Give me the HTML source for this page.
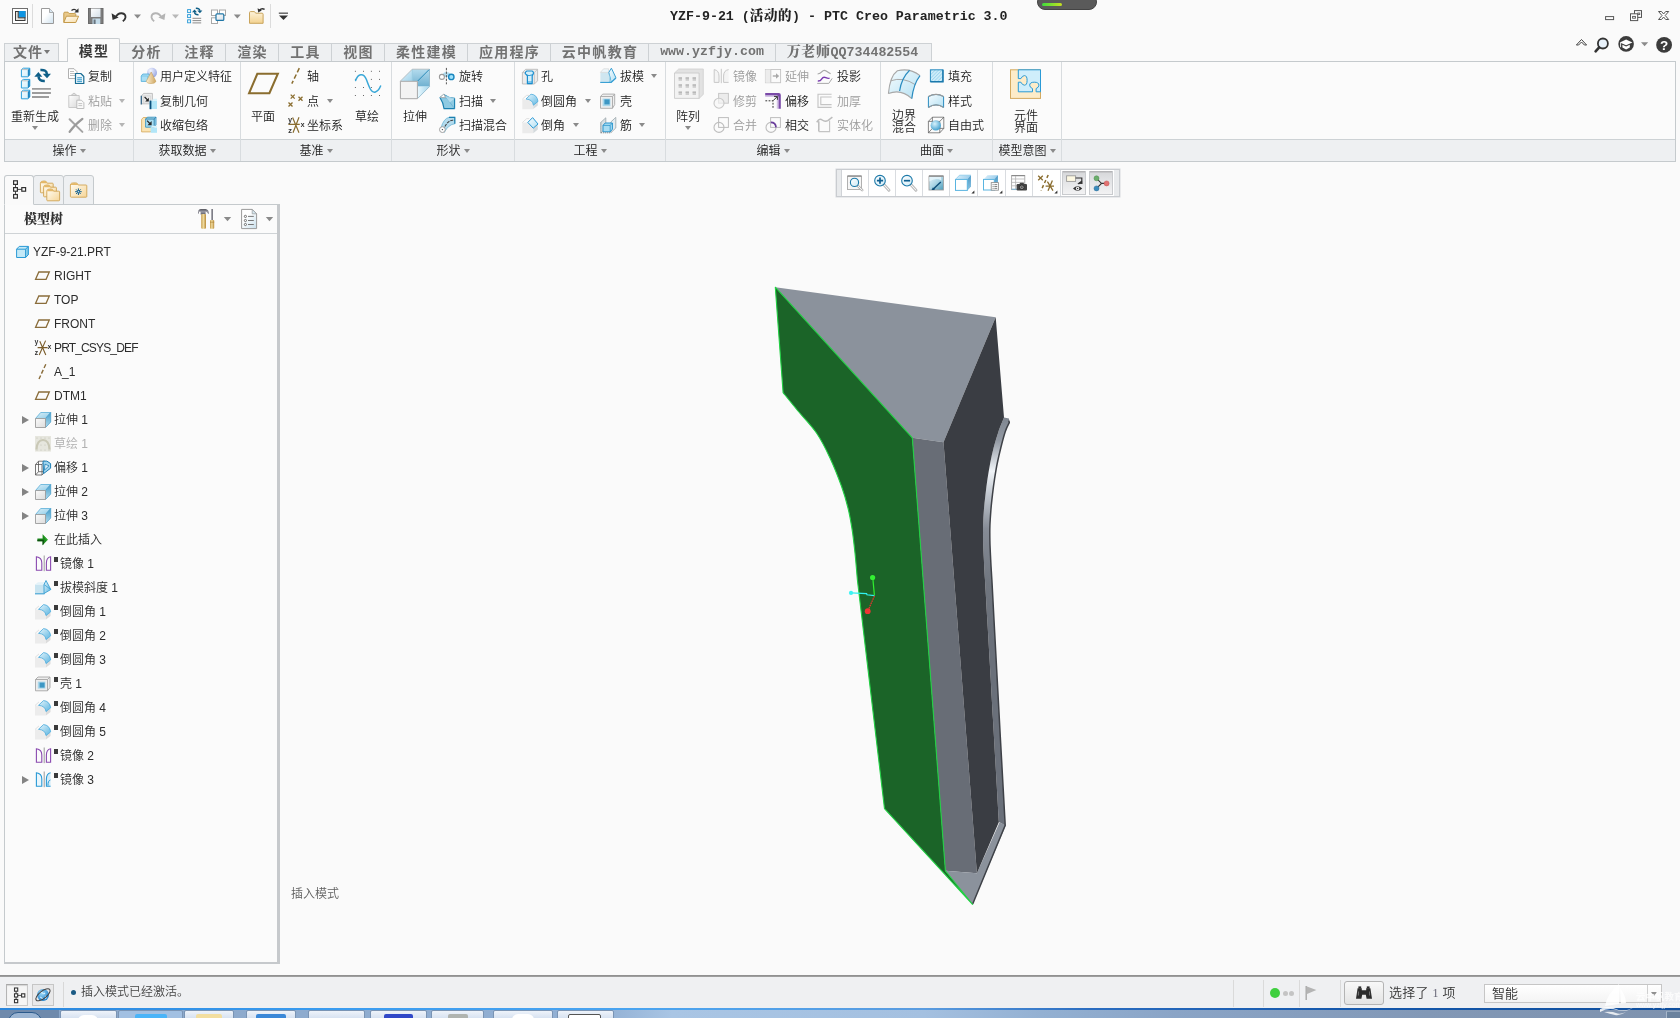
<!DOCTYPE html>
<html lang="zh-CN">
<head>
<meta charset="utf-8">
<title>YZF-9-21 - PTC Creo Parametric 3.0</title>
<style>
*{box-sizing:border-box;margin:0;padding:0}
html,body{width:1680px;height:1018px;overflow:hidden;background:#fafafa}
body{will-change:transform;position:relative;font-family:"Liberation Sans","Noto Sans CJK SC",sans-serif;font-size:12px;color:#3a3a3a}
.abs{position:absolute}
svg{position:absolute;overflow:visible}
/* title */
#title{position:absolute;left:670px;top:8px;width:340px;height:18px;line-height:18px;font-family:"Liberation Mono","Noto Serif CJK SC",monospace;font-weight:bold;font-size:13.3px;color:#222;white-space:nowrap;letter-spacing:0}
#title .cj{font-size:13.5px;letter-spacing:0.6px;font-weight:900}
/* tabs */
.tab{position:absolute;top:43px;height:19px;border:1px solid #cdd1d4;border-bottom:none;background:#eef0f2;font-family:"Liberation Sans","Noto Sans CJK SC",sans-serif;font-weight:bold;font-size:14px;letter-spacing:1.3px;color:#727272;text-align:center;line-height:16px;white-space:nowrap;padding-left:1px}
.tab.on{top:38px;height:24px;background:#fafafa;color:#3a3a3a;line-height:25px;border-color:#c9cdd0;z-index:3;border-radius:2px 2px 0 0}
.tab.lat{font-family:"Liberation Mono","Noto Sans CJK SC",monospace;font-size:13.3px;letter-spacing:0;font-weight:bold;padding-left:0}
/* ribbon */
#ribbon{position:absolute;left:4px;top:61px;width:1672px;height:101px;border:1px solid #c5cacd;background:#fbfbfb}
#riblab{position:absolute;left:5px;top:139px;width:1670px;height:22px;background:#eef0f2;border-top:1px solid #cdd2d5}
.gsep{position:absolute;top:62px;width:1px;height:99px;background:#d8dcdf}
.glab{position:absolute;top:142px;height:16px;line-height:16px;text-align:center;font-size:12px;color:#1c1c1c;white-space:nowrap;font-weight:350;margin-top:1px}
.dd{display:inline-block;width:0;height:0;border-left:3.5px solid transparent;border-right:3.5px solid transparent;border-top:4px solid #8a8a8a;vertical-align:middle;margin-left:3px;position:relative;top:-1px}
.t{position:absolute;height:16px;line-height:16px;font-size:12px;color:#1c1c1c;white-space:nowrap;font-weight:350;margin-top:1px}
.t.g{color:#9c9c9c}
.t.c{text-align:center}
.arr{position:absolute;width:0;height:0;border-left:3.5px solid transparent;border-right:3.5px solid transparent;border-top:4px solid #8a8a8a}
/* tree */
#treetabs div{position:absolute;top:175px;height:30px;width:31px;border:1px solid #c5cacd;background:#eef0f2;border-radius:3px 3px 0 0}
#tree{position:absolute;left:4px;top:204px;width:276px;height:760px;border:1px solid #c5cacd;border-right:3px solid #c6c9cc;border-bottom:2px solid #c6c9cc;background:#fbfbfb}
#treehdr{position:absolute;left:5px;top:205px;width:272px;height:29px;border-bottom:1.5px solid #cfd3d6}
.tr{position:absolute;left:54px;height:16px;line-height:16px;font-size:12px;color:#2c2c2c;white-space:nowrap;margin-top:1px;font-weight:350}
.tr.g{color:#b0b0b0}
.exp{position:absolute;left:21.5px;width:0;height:0;border-top:4px solid transparent;border-bottom:4px solid transparent;border-left:7px solid #848484;margin-top:1px}
/* graphics toolbar */
#gtb{position:absolute;left:836px;top:169px;width:284px;height:28px;border:1px solid #c9ccd0;background:#fff;box-shadow:0 0 0 0.5px #d8dadd}
/* status */
#stline{position:absolute;left:0;top:975px;width:1680px;height:2px;background:linear-gradient(#8a8a8a,#a4a4a4)}
#status{position:absolute;left:0;top:977px;width:1680px;height:32px;background:#eff0f2}
#taskbar{position:absolute;left:0;top:1009px;width:1680px;height:9px;background:linear-gradient(90deg,#8aa6c8 0,#92b0d4 36%,#a9c5e4 40%,#a4c0e0 55%,#93b0d2 62%,#8aa4c6 70%,#8298b6 85%,#7e92ae 100%)}
</style>
</head>
<body>
<!--DEFS-->
<svg width="0" height="0" style="left:0;top:0">
<defs>
<linearGradient id="gb1" x1="0" y1="0" x2="1" y2="1"><stop offset="0" stop-color="#d9eff9"/><stop offset="1" stop-color="#8fcbe6"/></linearGradient>
<linearGradient id="gb2" x1="0" y1="0" x2="0" y2="1"><stop offset="0" stop-color="#3f9bc9"/><stop offset="1" stop-color="#b7ddee"/></linearGradient>
<linearGradient id="gb3" x1="0" y1="0" x2="1" y2="1"><stop offset="0" stop-color="#e8f6fc"/><stop offset="1" stop-color="#58b4e0"/></linearGradient>
<linearGradient id="gg1" x1="0" y1="0" x2="1" y2="1"><stop offset="0" stop-color="#fafafa"/><stop offset="1" stop-color="#dcdcdc"/></linearGradient>
<g id="i-root"><path d="M0.600 6.200l2.600-2.800h9v8.400l-2.600 2.700h-9z" fill="#c4e9f7" stroke="#2a9ad6" stroke-width="1" stroke-linejoin="round"/><path d="M9.600 6.200l2.600-2.800v8.400l-2.600 2.700z" fill="#8fd0ec" stroke="#2a9ad6" stroke-width="1" stroke-linejoin="round"/><path d="M0.600 6.200h9" fill="none" stroke="#2a9ad6" stroke-width="1"/></g>
<g id="i-plane"><path d="M1.6 12.3L4.8 5h10.5l-3.2 7.3z" fill="none" stroke="#8a6d3b" stroke-width="1.3" stroke-linejoin="miter"/></g>
<g id="i-csys"><path d="M3.6 8.6h10M11.6 1.6L5.2 16M5.8 2.2l6 13.8" stroke="#7a5c2a" stroke-width="1.1" fill="none"/><text x="0.6" y="5.4" font-family="Liberation Mono,monospace" font-size="6.5" font-weight="bold" fill="#333">y</text><text x="0.6" y="15.6" font-family="Liberation Mono,monospace" font-size="6.5" font-weight="bold" fill="#333">z</text><text x="13.6" y="10.4" font-family="Liberation Mono,monospace" font-size="6.5" font-weight="bold" fill="#333">x</text></g>
<g id="i-axis"><path d="M11.8 1.2L5 16" stroke="#8a6d3b" stroke-width="1.4" stroke-dasharray="4.2 2" fill="none"/></g>
<g id="i-extrude"><path d="M1.5 7.5l5.2-6h10v9.5l-5.2 5.5h-10z" fill="#f2f2f2"/><path d="M1.5 7.5l5.2-6h10l-5.2 6z" fill="url(#gb1)" stroke="#5aaed8" stroke-width="0.8"/><path d="M11.5 7.5l5.2-6v9.5l-5.2 5.5z" fill="url(#gb2)" stroke="#4b9fcb" stroke-width="0.8"/><path d="M1.5 7.5h10v9h-10z" fill="url(#gg1)" stroke="#9c9c9c" stroke-width="0.9"/></g>
<g id="i-sketch"><rect x="1" y="1" width="16" height="15.6" fill="#e6e6de"/><path d="M2.5 14.5Q3 5 9 5t6.5 9.5" fill="none" stroke="#c9c8b6" stroke-width="2.2"/><g fill="#c4c4b4"><circle cx="3" cy="3" r=".6"/><circle cx="7" cy="3" r=".6"/><circle cx="11" cy="3" r=".6"/><circle cx="15" cy="3" r=".6"/><circle cx="3" cy="15" r=".6"/><circle cx="7" cy="15" r=".6"/><circle cx="11" cy="15" r=".6"/><circle cx="15" cy="15" r=".6"/><circle cx="7" cy="10" r=".6"/><circle cx="11" cy="10" r=".6"/></g></g>
<g id="i-offset"><path d="M1.5 5.5v10.5h6.5v-10.5zM1.5 5.5l3-3.3h6.5l-3 3.3M4.5 2.2v10.5l-3 3.3M8 16l3-3.3v-10.5M4.5 12.7h6.5" fill="none" stroke="#555" stroke-width="0.8"/><path d="M9 2.2q4-1.4 7.6 2.4v4.6L9.6 14.6z" fill="#9fd5ee" stroke="#1f7fb5" stroke-width="1" stroke-linejoin="round"/><path d="M11 5.2l4 1.6l-4.6 4.4z" fill="#e4f5fc" stroke="#1f7fb5" stroke-width="0.8" stroke-linejoin="round"/></g>
<g id="i-insert"><path d="M3.4 7.4h5.2V3.2l5.2 5.5l-5.2 5.6v-4.1H3.4z" fill="#1c8a1c"/><path d="M3.4 8.8h6.4v4.2l-1.2 1.3v-4.1H3.4z" fill="#0d4f10"/><path d="M8.6 3.2l5.2 5.5l-1.4 1.4z" fill="#35b535" opacity=".7"/></g>
<g id="i-mirror"><path d="M10.2 0.5V16.2" stroke="#9a9a9a" stroke-width="1"/><path d="M2.4 1.8Q7.8 2.6 7.8 8v7.2H2.4z" fill="none" stroke="#8a4ab0" stroke-width="1.1"/><path d="M16.600 1.800Q12.400 2.600 12.400 8v7.200h4.200z" fill="none" stroke="#8a4ab0" stroke-width="1.100"/></g>
<g id="i-mirror3"><path d="M10.2 0.5V16.2" stroke="#9a9a9a" stroke-width="1"/><path d="M2.4 1.8Q7.8 2.6 7.8 8v7.2H2.4z" fill="#eaf6fc" stroke="#2a9ad6" stroke-width="1.1"/><path d="M16.6 1.8Q12.4 2.6 12.4 8v7.2h4.2" fill="#d4ecf8" stroke="#2a9ad6" stroke-width="1.1"/><path d="M16.4 9q-2.6.6-2.4 5.6" fill="none" stroke="#2a9ad6" stroke-width="1"/></g>
<g id="i-draft"><path d="M1 5.5h9v9H1z" fill="#c9e4f0"/><path d="M1 5.5l3-2.2h7.5l-1.5 2.2z" fill="#e3f2f9"/><path d="M10 5.5l2-4l4.8 9l-6.8 4z" fill="url(#gb3)" stroke="#3a9fd2" stroke-width="0.9" stroke-linejoin="round"/><path d="M10 5.5l6.8 5" stroke="#3a9fd2" stroke-width="0.8"/><path d="M1 14.8h9.5" stroke="#3a9fd2" stroke-width="1.1"/></g>
<g id="i-round"><path d="M1 6.5h5.5q5 .5 5.5 6v4H1z" fill="#ececec"/><path d="M12 12.5l4.5-3.5v4l-4.5 3.5z" fill="#dcdcdc"/><path d="M4.5 6.3L9.5 1.6q6 .4 7.2 7.2L12 12.6q-.6-5.8-7.5-6.3z" fill="url(#gb3)" stroke="#49a9dc" stroke-width="0.8" stroke-linejoin="round"/><path d="M1 6.5l4-3.6" stroke="#e0e0e0" stroke-width="1"/></g>
<g id="i-shell"><path d="M1.5 4.5l2.5-2.5h12v10.5l-2.5 3.3h-12z" fill="#ededed" stroke="#a6a6a6" stroke-width="0.9" stroke-linejoin="round"/><path d="M1.5 4.5h12v11.3M13.5 4.5L16 2" fill="none" stroke="#a6a6a6" stroke-width="0.9"/><rect x="3.8" y="6.6" width="7.6" height="7" fill="#a9d6ea"/><rect x="5.6" y="7.6" width="5" height="5" fill="#3d97c4"/></g>
</defs>
</svg>
<!--/DEFS-->
<!-- TITLE BAR -->
<div id="title">YZF-9-21 (<span class="cj">活动的</span>) - PTC Creo Parametric 3.0</div>
<div class="abs" style="left:1037px;top:-6px;width:60px;height:16px;border-radius:8px;background:#5a5a5a;border:1px solid #444"></div>
<div class="abs" style="left:1042px;top:3px;width:20px;height:3px;border-radius:2px;background:linear-gradient(90deg,#3ddc3d,#c8e020)"></div>
<!--QAT-->
<svg id="qat" style="left:0;top:0" width="300" height="32" viewBox="0 0 300 32">
<defs>
<linearGradient id="gdoc" x1="0" y1="0" x2="1" y2="1"><stop offset="0.4" stop-color="#fff"/><stop offset="1" stop-color="#cfe2ef"/></linearGradient>
<linearGradient id="gfold" x1="0" y1="0" x2="0" y2="1"><stop offset="0" stop-color="#fdf3dc"/><stop offset="1" stop-color="#f3d28f"/></linearGradient>
<linearGradient id="gfold2" x1="0" y1="0" x2="1" y2="1"><stop offset="0" stop-color="#fffaf0"/><stop offset="1" stop-color="#f7dfae"/></linearGradient>
<linearGradient id="gwin" x1="0" y1="0" x2="1" y2="1"><stop offset="0" stop-color="#fff"/><stop offset="1" stop-color="#d4dfe8"/></linearGradient>
</defs>
<!-- window icon -->
<rect x="12.5" y="8.5" width="15" height="15" fill="#fff" stroke="#6e6e6e"/>
<rect x="15.5" y="11.5" width="9.5" height="9" fill="#e4e2dc" stroke="#3a3a3a"/>
<rect x="18.5" y="11" width="7" height="6.5" fill="#0d94e2"/>
<path d="M18.2 11v6.8H25.4" fill="none" stroke="#3a3a3a" stroke-width="1"/>
<rect x="32" y="4" width="1" height="24" fill="#dcdcdc"/>
<!-- new doc -->
<path d="M41.5 8.5h8l4 4v11h-12z" fill="url(#gdoc)" stroke="#9a9a9a"/>
<path d="M49.5 8.5v4h4" fill="#d8e6f0" stroke="#9a9a9a" stroke-width="0.8"/>
<!-- open folder -->
<path d="M63.8 22.3V13.2q0-1 1-1h3.2l1.2 1.4h5.6q1 0 1 1v1.4" fill="#e9c98a" stroke="#c49a4a" stroke-width="1"/>
<path d="M63.8 22.5l2.6-6.3h12.2l-2.8 6.3z" fill="url(#gfold2)" stroke="#c49a4a" stroke-width="1" stroke-linejoin="round"/>
<path d="M71.5 10.5q3-2.3 5.2.3" fill="none" stroke="#333" stroke-width="1.3"/><path d="M78.5 8.3v4.2h-4.2z" fill="#333"/>
<!-- save -->
<rect x="88.5" y="8.5" width="14.5" height="15" fill="#7c7c7c" stroke="#6a6a6a"/>
<rect x="91" y="8.5" width="9.5" height="8.5" fill="url(#gwin)"/>
<rect x="92.5" y="18.5" width="7.8" height="5.5" fill="#c4dbe9"/>
<rect x="93.6" y="19.5" width="2" height="4.5" fill="#6a7680"/>
<!-- undo -->
<path d="M115.5 17.5q2.2-4.6 6.3-4.2q4.2.6 3.6 4.4q-.4 2.2-2.6 3.6" fill="none" stroke="#333" stroke-width="1.9"/>
<path d="M111.6 13.3l1 6.6l6-2.3z" fill="#333"/>
<path d="M134 14.5h7l-3.5 4z" fill="#8a8a8a"/>
<!-- redo -->
<path d="M161.5 17.5q-2.2-4.6-6.3-4.2q-4.2.6-3.6 4.4q.4 2.2 2.6 3.6" fill="none" stroke="#b4b4b4" stroke-width="1.9"/>
<path d="M165.4 13.3l-1 6.6l-6-2.3z" fill="#b4b4b4"/>
<path d="M172 14.5h7l-3.5 4z" fill="#b8b8b8"/>
<!-- regenerate -->
<g fill="#eaf6fc" stroke="#2a9ad6" stroke-width="0.9"><rect x="187.6" y="9.6" width="3" height="3"/><rect x="187.6" y="14.6" width="3" height="3"/><rect x="187.6" y="19.8" width="3" height="3"/></g>
<g stroke="#8a8a8a" stroke-width="1"><path d="M192.5 18.3h8.7M192.5 20.6h8.7M192.5 22.9h8.7"/></g>
<path d="M192 12.300l2.500-2.900l2.500 2.900z" fill="#0f5e86"/><path d="M194.600 12.100Q194.700 15 198.500 14.800" fill="none" stroke="#0f5e86" stroke-width="1.500"/>
<path d="M197.300 10.600h5.100l-2.500 2.700z" fill="#0f5e86"/><path d="M199.800 10.800Q199.700 8.100 195.800 8.400" fill="none" stroke="#0f5e86" stroke-width="1.500"/>
<!-- windows -->
<g fill="#fff" stroke="#a8a8a8" stroke-width="1"><rect x="211.5" y="10" width="6" height="5.5"/><rect x="219.5" y="10" width="6" height="5.5"/><rect x="211.5" y="17.8" width="6" height="5.7"/></g>
<rect x="216" y="13.8" width="7.8" height="6.6" rx="1" fill="url(#gwin)" stroke="#1f76a6" stroke-width="1.2"/>
<path d="M233.8 14.5h7l-3.5 4z" fill="#8a8a8a"/>
<!-- close folder -->
<path d="M249.5 23.3V12.6q0-1 1-1h4l1.2 1.6h6.4q1 0 1 1v9.1z" fill="url(#gfold)" stroke="#c9a45c" stroke-width="1" stroke-linejoin="round"/>
<path d="M264.600 9.400q-3-1.800-5.200 1" fill="none" stroke="#333" stroke-width="1.400"/><path d="M257.600 8.200l.6 4.400l3.600-2z" fill="#333"/>
<rect x="270" y="4" width="1" height="24" fill="#dcdcdc"/>
<!-- customize -->
<rect x="278.8" y="12.6" width="9.2" height="1.1" fill="#333"/><path d="M279 15.4h9l-4.5 4.6z" fill="#333"/>
</svg>
<!--/QAT-->
<!--WINCTL-->
<svg id="winctl" style="left:1560px;top:0" width="120" height="62" viewBox="1560 0 120 62">
<rect x="1605.600" y="16.600" width="8" height="3" fill="#fff" stroke="#555" stroke-width="1"/>
<rect x="1634.500" y="10.600" width="7" height="6.800" fill="#fff" stroke="#555" stroke-width="1"/><rect x="1637.800" y="13" width="2" height="1.600" fill="none" stroke="#555" stroke-width="0.800"/>
<rect x="1630.500" y="13.800" width="7.200" height="6.800" fill="#fff" stroke="#555" stroke-width="1"/><rect x="1632.600" y="16.400" width="2.800" height="1.800" fill="none" stroke="#555" stroke-width="0.900"/>
<path d="M1658.500 11.500h3l2.100 2.500l2.100-2.500h3l-3.500 4l3.500 4h-3l-2.100-2.500l-2.100 2.500h-3l3.500-4z" fill="#fff" stroke="#555" stroke-width="1" stroke-linejoin="round"/>
<path d="M1576.400 45l5.100-5.500l5.100 5.500h-2.200l-2.900-3l-2.900 3z" fill="#fff" stroke="#444" stroke-width="1" stroke-linejoin="round"/>
<circle cx="1602.900" cy="43.500" r="5" fill="#e8f1fa" stroke="#333" stroke-width="1.800"/><path d="M1599.200 47.400l-3.600 4" stroke="#333" stroke-width="2.600" stroke-linecap="round"/>
<circle cx="1626.100" cy="43.900" r="7.800" fill="#3c3c3c"/><path d="M1619.800 42.400l6.300-2.800l6.300 2.800l-6.300 2.800z" fill="#fff"/><path d="M1622.400 44.800v2.800l3.700 1.800l3.700-1.800v-2.800l-3.700 1.700z" fill="#fff"/><path d="M1620.600 42.800v4.400" stroke="#fff" stroke-width="0.900"/>
<path d="M1641 42.200h7.200l-3.600 4z" fill="#8a8a8a"/>
<circle cx="1664.100" cy="44.900" r="7.900" fill="#3c3c3c"/>
<text x="1664.100" y="49.800" text-anchor="middle" font-family="Liberation Sans,sans-serif" font-weight="bold" font-size="13.500" fill="#fff">?</text>
</svg>
<!--/WINCTL-->
<!--TABS-->
<div class="tab" style="left:4px;width:55px;padding-left:0;letter-spacing:1px">文件<span class="dd" style="margin-left:1px;border-top-color:#777;border-left-width:3.5px;border-right-width:3.5px;border-top-width:4px"></span></div>
<div class="tab on" style="left:67px;width:53px">模型</div>
<div class="tab" style="left:119px;width:54px">分析</div>
<div class="tab" style="left:172px;width:54px">注释</div>
<div class="tab" style="left:225px;width:54px">渲染</div>
<div class="tab" style="left:278px;width:54px">工具</div>
<div class="tab" style="left:331px;width:54px">视图</div>
<div class="tab" style="left:384px;width:84px">柔性建模</div>
<div class="tab" style="left:467px;width:84px">应用程序</div>
<div class="tab" style="left:550px;width:99px">云中帆教育</div>
<div class="tab lat" style="left:648px;width:128px">www.yzfjy.com</div>
<div class="tab lat" style="left:775px;width:157px"><span style="position:relative;top:-2px;left:-1px"><span style="font-family:'Noto Serif CJK SC',serif;font-weight:900;font-size:14px;letter-spacing:0.6px">万老师</span>QQ734482554</span></div>
<!--RIBBON-->
<div id="ribbon"></div>
<div id="riblab"></div>
<!--RIBBONCONTENT-->
<div class="gsep" style="left:133px"></div><div class="gsep" style="left:240px"></div><div class="gsep" style="left:391px"></div><div class="gsep" style="left:514px"></div><div class="gsep" style="left:665px"></div><div class="gsep" style="left:880px"></div><div class="gsep" style="left:992px"></div><div class="gsep" style="left:1061px"></div>
<div class="glab" style="left:5px;width:128px">操作<span class="dd"></span></div>
<div class="glab" style="left:134px;width:106px">获取数据<span class="dd"></span></div>
<div class="glab" style="left:241px;width:150px">基准<span class="dd"></span></div>
<div class="glab" style="left:392px;width:122px">形状<span class="dd"></span></div>
<div class="glab" style="left:515px;width:150px">工程<span class="dd"></span></div>
<div class="glab" style="left:666px;width:214px">编辑<span class="dd"></span></div>
<div class="glab" style="left:881px;width:111px">曲面<span class="dd"></span></div>
<div class="glab" style="left:993px;width:68px">模型意图<span class="dd"></span></div>
<!-- group 1 -->
<div class="t c" style="left:4px;width:62px;top:108px">重新生成</div><div class="arr" style="left:32px;top:126px"></div>
<div class="t" style="left:88px;top:68px">复制</div>
<div class="t g" style="left:88px;top:93px">粘贴</div><div class="arr" style="left:119px;top:99px;border-top-color:#b5b5b5"></div>
<div class="t g" style="left:88px;top:117px">删除</div><div class="arr" style="left:119px;top:123px;border-top-color:#b5b5b5"></div>
<!-- group 2 -->
<div class="t" style="left:160px;top:68px">用户定义特征</div>
<div class="t" style="left:160px;top:93px">复制几何</div>
<div class="t" style="left:160px;top:117px">收缩包络</div>
<!-- group 3 -->
<div class="t c" style="left:243px;width:40px;top:108px">平面</div>
<div class="t" style="left:307px;top:68px">轴</div>
<div class="t" style="left:307px;top:93px">点</div><div class="arr" style="left:327px;top:99px"></div>
<div class="t" style="left:307px;top:117px">坐标系</div>
<div class="t c" style="left:347px;width:40px;top:108px">草绘</div>
<!-- group 4 -->
<div class="t c" style="left:395px;width:40px;top:108px">拉伸</div>
<div class="t" style="left:459px;top:68px">旋转</div>
<div class="t" style="left:459px;top:93px">扫描</div><div class="arr" style="left:490px;top:99px"></div>
<div class="t" style="left:459px;top:117px">扫描混合</div>
<!-- group 5 -->
<div class="t" style="left:541px;top:68px">孔</div>
<div class="t" style="left:541px;top:93px">倒圆角</div><div class="arr" style="left:585px;top:99px"></div>
<div class="t" style="left:541px;top:117px">倒角</div><div class="arr" style="left:573px;top:123px"></div>
<div class="t" style="left:620px;top:68px">拔模</div><div class="arr" style="left:651px;top:74px"></div>
<div class="t" style="left:620px;top:93px">壳</div>
<div class="t" style="left:620px;top:117px">筋</div><div class="arr" style="left:639px;top:123px"></div>
<!-- group 6 -->
<div class="t c" style="left:668px;width:40px;top:108px">阵列</div><div class="arr" style="left:685px;top:126px"></div>
<div class="t g" style="left:733px;top:68px">镜像</div>
<div class="t g" style="left:733px;top:93px">修剪</div>
<div class="t g" style="left:733px;top:117px">合并</div>
<div class="t g" style="left:785px;top:68px">延伸</div>
<div class="t" style="left:785px;top:93px">偏移</div>
<div class="t" style="left:785px;top:117px">相交</div>
<div class="t" style="left:837px;top:68px">投影</div>
<div class="t g" style="left:837px;top:93px">加厚</div>
<div class="t g" style="left:837px;top:117px">实体化</div>
<!-- group 7 -->
<div class="t c" style="left:884px;width:40px;top:110px;line-height:11.5px;height:26px">边界<br>混合</div>
<div class="t" style="left:948px;top:68px">填充</div>
<div class="t" style="left:948px;top:93px">样式</div>
<div class="t" style="left:948px;top:117px">自由式</div>
<!-- group 8 -->
<div class="t c" style="left:1006px;width:40px;top:110px;line-height:11.5px;height:26px">元件<br>界面</div>
<!--/RIBBONCONTENT-->
<!--RIB1-->
<svg id="ribico1" style="left:0;top:0" width="520" height="140" viewBox="0 0 520 140">
<defs>
<linearGradient id="r-cube" x1="0" y1="0" x2="1" y2="1"><stop offset="0" stop-color="#f4fcff"/><stop offset="1" stop-color="#d2effa"/></linearGradient>
<linearGradient id="r-lb" x1="0" y1="0" x2="1" y2="1"><stop offset="0" stop-color="#e6f6fd"/><stop offset="1" stop-color="#9fd2ea"/></linearGradient>
<linearGradient id="r-lb2" x1="0" y1="0" x2="0" y2="1"><stop offset="0" stop-color="#b4dcee"/><stop offset="1" stop-color="#6fb0d0"/></linearGradient>
<linearGradient id="r-lb3" x1="0" y1="0" x2="1" y2="0"><stop offset="0" stop-color="#eaf8fe"/><stop offset="1" stop-color="#a4d6ec"/></linearGradient>
<radialGradient id="r-sph" cx="0.35" cy="0.3" r="0.8"><stop offset="0" stop-color="#f4f6ff"/><stop offset="1" stop-color="#8f9fe0"/></radialGradient>
<linearGradient id="r-cone" x1="0" y1="0" x2="1" y2="0"><stop offset="0" stop-color="#fdf0d4"/><stop offset="1" stop-color="#cfa660"/></linearGradient>
<linearGradient id="r-gray" x1="0" y1="0" x2="1" y2="1"><stop offset="0" stop-color="#fff"/><stop offset="1" stop-color="#d8d8d8"/></linearGradient>
</defs>
<!-- regenerate big -->
<g id="rcube"><path d="M21.4 69.6l2-1.4h6.400v6.800l-2 1.800h-6.400z" fill="url(#r-cube)" stroke="#2aa0dc" stroke-width="1" stroke-linejoin="round"/><path d="M27.800 69.800l2-1.600v6.800l-2 1.800z" fill="#1f86c0"/><path d="M21.400 69.600h6.400" stroke="#b0b0b0" stroke-width="0.800"/></g>
<use href="#rcube" y="11.2"/><use href="#rcube" y="22"/>
<path d="M32 88.900h18.900M32 93h18.900M32 97h17" stroke="#9c9c9c" stroke-width="1.800"/>
<path d="M34.300 76.800l4.100-4.800l3.900 4.800z" fill="#0f5f88"/><path d="M38.500 76.400Q38.700 81.300 44.800 81" fill="none" stroke="#0f5f88" stroke-width="2.500"/>
<path d="M42.800 73.800h8.200l-4 4.500z" fill="#0f5f88"/><path d="M46.900 74.200Q46.700 69.500 40.400 70" fill="none" stroke="#0f5f88" stroke-width="2.500"/>
<!-- copy -->
<path d="M68.500 68.700h5.500l3 3v6.800h-8.500z" fill="#fff" stroke="#a8a8a8" stroke-width="0.900"/><path d="M70 71.500h4M70 73.500h5M70 75.500h5" stroke="#b8b8b8" stroke-width="0.900"/>
<path d="M75.500 73.500h5.300l3 3v7h-8.300z" fill="#eef8fd" stroke="#1a6d94" stroke-width="1.200" stroke-linejoin="round"/><path d="M77.200 77.800h4.800M77.200 79.800h4.800M77.200 81.700h4.800" stroke="#2a94c8" stroke-width="1"/>
<!-- paste disabled -->
<path d="M68.800 95.500h10.400v12h-10.400z" fill="url(#r-gray)" stroke="#c4c4c4" stroke-width="0.900"/><path d="M71.400 95.500l.8-1.400h1l.8-1.200l.8 1.200h1l.8 1.400z" fill="#e4e4e4" stroke="#bcbcbc" stroke-width="0.800"/>
<path d="M76.800 100.200h4.600l2.500 2.500v5.800h-7.100z" fill="#fafafa" stroke="#b8b8b8" stroke-width="0.900"/><path d="M78.400 103.600h3.800M78.400 105.600h3.800" stroke="#c0c0c0" stroke-width="0.900"/>
<!-- delete X -->
<path d="M69.600 119.300l12.800 12.600" stroke="#a4a4a4" stroke-width="2" stroke-linecap="round"/><path d="M82.400 118.800q-8 6-12.800 13" fill="none" stroke="#9a9a9a" stroke-width="2.200" stroke-linecap="round"/>
<!-- UDF -->
<circle cx="152" cy="72.800" r="5" fill="url(#r-sph)"/>
<path d="M141.200 76l1.600-2h6.400v6l-1.600 1.400h-6.400z" fill="#a9def4" stroke="#3aa0d4" stroke-width="0.700"/><path d="M141.200 76h6.400v5.400" fill="none" stroke="#6cc0e4" stroke-width="0.700"/>
<path d="M151.200 72l4.800 9.400q-1.200 2.200-5 2.200t-4.800-2.200z" fill="url(#r-cone)" stroke="#c49a50" stroke-width="0.500"/>
<!-- copy geom -->
<path d="M141.600 96l2-2.600h8.800v8l-2 2.400h-8.800z" fill="#ececec" stroke="#b4b4b4" stroke-width="0.800"/><path d="M141.300 95.800v8.600" stroke="#3c6a8a" stroke-width="1.300"/><path d="M143.600 95.800h7v7.400h-7z" fill="#e8e8e8" stroke="#cfcfcf" stroke-width="0.600"/>
<path d="M144.600 97l3.400 3.400" stroke="#222" stroke-width="1.200"/><path d="M148.800 97.800v3.600h-3.600z" fill="#222"/>
<path d="M149.600 100.800h7.400v8.200h-7.400z" fill="#b2e6f8"/><path d="M149.600 100.600v8.600h1.800v-8.600z" fill="#0c507c"/><path d="M151.400 100.800l2-2h3.600v2" fill="#d8f2fb"/>
<!-- shrinkwrap -->
<path d="M141.600 119.500l1.600-2h9v12.400l-1.600 2h-9z" fill="#fbe4b4" stroke="#d4a85c" stroke-width="0.800" stroke-linejoin="round"/>
<path d="M145.600 119l1.800-1.800h8.600v7.800l-1.800 2.200h-8.600z" fill="#a8def2" stroke="#2a8cc0" stroke-width="0.800" stroke-linejoin="round"/><path d="M154.200 119h-8.600M154.200 119v8.200M154.200 119l1.800-1.800" stroke="#1a6fa0" stroke-width="0.800" fill="none"/>
<path d="M147 120.600l3.600 3.600" stroke="#2a2a2a" stroke-width="1.300"/><path d="M151.600 121v4.200h-4.200z" fill="#2a2a2a"/>
<path d="M150.600 127.400h6.400v5.400h-6.400z" fill="#b2e6f8"/><path d="M150.600 127.400l1.600-1.600h4.800v1.600z" fill="#daf3fc"/>
<!-- plane big -->
<path d="M257.300 73.800h20.500l-8.400 19.400h-20.300z" fill="none" stroke="#8a6d2f" stroke-width="2.100" stroke-linejoin="miter"/>
<!-- axis -->
<path d="M299.300 68.200L291.800 83.700" stroke="#8a6d2f" stroke-width="1.500" stroke-dasharray="4.600 2.400"/>
<!-- points -->
<g stroke="#8a6d2f" stroke-width="1.300"><path d="M290.700 94.600l4 4m0-4l-4 4"/><path d="M298.500 96.700l4 4m0-4l-4 4"/><path d="M288.500 102.500l4 4m0-4l-4 4"/></g>
<!-- csys -->
<path d="M288.400 124.400h11.400M299 117.200l-6 15.600M292.600 117.600l6.400 15.200" stroke="#8a6d2f" stroke-width="1.200" fill="none"/>
<text x="288" y="122" font-family="Liberation Mono,monospace" font-size="7" font-weight="bold" fill="#333">y</text><text x="288" y="133" font-family="Liberation Mono,monospace" font-size="7" font-weight="bold" fill="#333">z</text><text x="300.400" y="127" font-family="Liberation Mono,monospace" font-size="7" font-weight="bold" fill="#333">x</text>
<!-- sketch big -->
<g fill="#666"><rect x="354.900" y="70.800" width="1" height="1"/><rect x="363" y="70.800" width="1" height="1"/><rect x="370.900" y="70.800" width="1" height="1"/><rect x="379" y="70.800" width="1" height="1"/><rect x="354.900" y="78.900" width="1" height="1"/><rect x="370.900" y="78.900" width="1" height="1"/><rect x="379" y="78.900" width="1" height="1"/><rect x="354.900" y="87" width="1" height="1"/><rect x="363" y="87" width="1" height="1"/><rect x="370.900" y="87" width="1" height="1"/><rect x="354.900" y="95" width="1" height="1"/><rect x="363" y="95" width="1" height="1"/><rect x="370.900" y="95" width="1" height="1"/><rect x="379" y="95" width="1" height="1"/></g>
<path d="M355.600 80.600C358 73.500 363.500 72.400 366.400 79.500C369 86 371 93.600 375.400 92C378.400 91 379.600 88.400 380.600 86" fill="none" stroke="#3aa8d8" stroke-width="1.500" stroke-linecap="round"/>
<!-- extrude big -->
<path d="M400.300 81.200l12-12h17.200v17.400l-12 12z" fill="#d9f0fa"/>
<path d="M400.300 81.200l12-12v12z" fill="url(#r-lb)"/>
<path d="M412.300 69.200h17.200v17.400h-12v-5.400h-5.200z" fill="url(#r-lb2)"/>
<path d="M417.500 86.600h12l-12 12z" fill="url(#r-lb3)"/>
<path d="M417.500 81.200l12-12" stroke="#2a8ab8" stroke-width="1"/><path d="M412.300 69.200v12" stroke="#8cc4dc" stroke-width="0.600"/>
<path d="M400.300 81.200l12-12h17.200" fill="none" stroke="#b4bcc0" stroke-width="0.900"/><path d="M429.500 69.200v17.400l-12 12" fill="none" stroke="#8ab4c8" stroke-width="0.800"/>
<path d="M400.400 81.300h17v17.400h-17z" fill="#f3f3f3" stroke="#a8a8a8" stroke-width="1"/>
<!-- revolve -->
<path d="M441.900 74.400q4.500-4.600 9.400 0v2.500h-9.400z" fill="#b2dcee"/>
<path d="M446.400 67.900v16.400" stroke="#555" stroke-width="1" stroke-dasharray="2.400 1.200"/>
<circle cx="441.900" cy="76.900" r="2.500" fill="#fff" stroke="#9a9a9a" stroke-width="1.100"/>
<circle cx="451.300" cy="76.900" r="2.700" fill="#9fe2fb" stroke="#1a86be" stroke-width="1.400"/>
<!-- sweep -->
<path d="M444 94.600q4 3 10.600 3.800v10.200h-10.600q-.4-5.400-4-11z" fill="#8ecae2" stroke="#1a80b0" stroke-width="1.100" stroke-linejoin="round"/>
<path d="M444 94.600l10.600 14M440 97.600l14.600 1" stroke="#5aa8cc" stroke-width="0.600"/><path d="M444.200 95l5.600 7.600l4.800-4.200" fill="#c4e6f4" opacity=".7"/>
<path d="M440 97.400l3.800-3.400l1.600 3.600z" fill="#fff" stroke="#a8a8a8" stroke-width="0.800"/>
<!-- swept blend -->
<path d="M441 128q2.600-9.600 8-10.600h5.800v6.400q-6 .4-10.600 8.600z" fill="#b4dcee" stroke="#6ab4d4" stroke-width="0.800" stroke-linejoin="round"/>
<path d="M443.200 130.200q3.600-9.400 9.400-10h2.200" fill="none" stroke="#444" stroke-width="1.100" stroke-dasharray="3 1"/>
<path d="M449 117.400h5.800v6.400" fill="none" stroke="#1a80b0" stroke-width="1.100"/>
<circle cx="442.400" cy="129.600" r="2.900" fill="#fff" stroke="#a0a0a0" stroke-width="1"/><circle cx="442.400" cy="129.600" r="0.700" fill="#444"/>
</svg>
<!--/RIB1-->
<!--RIB2-->
<svg id="ribico2" style="left:0;top:0" width="1070" height="140" viewBox="0 0 1070 140">
<defs>
<linearGradient id="q-lb" x1="0" y1="0" x2="1" y2="1"><stop offset="0" stop-color="#ecf9fe"/><stop offset="1" stop-color="#62b8e2"/></linearGradient>
<linearGradient id="q-lb2" x1="0" y1="0" x2="1" y2="1"><stop offset="0" stop-color="#f6fcff"/><stop offset="1" stop-color="#b4e0f2"/></linearGradient>
<linearGradient id="q-pur" x1="0" y1="0" x2="0" y2="1"><stop offset="0" stop-color="#6a3c9c"/><stop offset="1" stop-color="#d8c8ec" stop-opacity="0.3"/></linearGradient>
<linearGradient id="q-pur2" x1="1" y1="0" x2="0" y2="0"><stop offset="0" stop-color="#6a3c9c"/><stop offset="1" stop-color="#d8c8ec" stop-opacity="0.2"/></linearGradient>
<radialGradient id="q-sph" cx="0.4" cy="0.35" r="0.7"><stop offset="0" stop-color="#d8f2fc"/><stop offset="1" stop-color="#3a9ccc"/></radialGradient>
<pattern id="q-hatch" width="2.400" height="2.400" patternUnits="userSpaceOnUse" patternTransform="rotate(-45)"><rect width="2.400" height="2.400" fill="#d4effa"/><rect width="2.400" height="1" fill="#9fd6ee"/></pattern>
</defs>
<!-- hole -->
<path d="M522.400 72.500l3.200-3.200h12v11.500l-3.200 3.200h-12z" fill="#ececec" stroke="#b4b4b4" stroke-width="0.800" stroke-linejoin="round"/><path d="M522.400 72.500h12v11.500M534.400 72.500l3.200-3.200" fill="none" stroke="#c0c0c0" stroke-width="0.800"/>
<path d="M525.200 73.600q0-2 1.600-2.600h5.400q1.600.6 1.200 2.600l-1.200 2v8h-4.800v-8z" fill="#d4effa" stroke="#1a8fd0" stroke-width="1.200" stroke-linejoin="round"/><path d="M526 74.800q3 1.600 6.400 0" fill="none" stroke="#1a8fd0" stroke-width="0.900"/><path d="M527 82h5" stroke="#1a8fd0" stroke-width="0.900"/>
<!-- round -->
<g id="q-round"><path d="M522.300 99.200h5.500q5 .5 5.500 6v4h-11z" fill="#ebebeb"/><path d="M533.300 105l4.500-3.500v4l-4.500 3.500z" fill="#d8dde0"/><path d="M526 99L531 94.200q6 .4 7 7.200l-4.600 3.800q-.6-5.700-7.400-6.200z" fill="url(#q-lb)" stroke="#49a9dc" stroke-width="0.800" stroke-linejoin="round"/><path d="M522.300 99.200l4.200-3.800h3" stroke="#dcdcdc" stroke-width="0.900" fill="none"/></g>
<!-- chamfer -->
<path d="M522.300 122.600h6l5 5.600v5h-11z" fill="#ebebeb"/><path d="M533.300 128l4.500-3.600v5l-4.500 3.800z" fill="#d4dadd"/><path d="M522.300 122.600l4.400-4h2.600" stroke="#dcdcdc" stroke-width="0.900" fill="none"/>
<path d="M527.800 122.400l4.800-4.800l5.400 6.400l-4.800 4.200z" fill="url(#q-lb2)" stroke="#2a9ad6" stroke-width="1" stroke-linejoin="round"/>
<!-- draft -->
<path d="M600.400 72.400h8.400v9h-8.400z" fill="#cfe6f0"/><path d="M600.400 72.400l3.200-3.600h5l.4 3.600z" fill="#eef6fa" stroke="#c8c8c8" stroke-width="0.500"/>
<path d="M608.800 72.400l2.600-4.200l4.600 9.600l-4.800 4.400z" fill="url(#q-lb2)" stroke="#3aa0d4" stroke-width="1" stroke-linejoin="round"/><path d="M608.800 72.400l2.400 9.800h-2.400z" fill="#a4d4e8"/>
<path d="M600.200 82.400h11l4.800-4.400" fill="none" stroke="#3aa0d4" stroke-width="1.200"/>
<!-- shell -->
<path d="M600.500 96.500l2.200-2.400h12v10.500l-2.200 3.700h-12z" fill="#efefef" stroke="#a8a8a8" stroke-width="0.900" stroke-linejoin="round"/><path d="M600.500 96.500h12v11.800M612.500 96.500l2.200-2.400" fill="none" stroke="#a8a8a8" stroke-width="0.900"/>
<rect x="602.600" y="98.600" width="7.800" height="7.600" fill="#a9d8ec"/><rect x="604.400" y="99.400" width="5.200" height="5" fill="#3d97c4"/>
<!-- rib -->
<path d="M600.800 122.400l5-4.600v10.600l-5 4.400z" fill="#d8e0e4" stroke="#9aa4aa" stroke-width="0.800"/><path d="M610.800 122l5-4.600v10.600l-5 4.800z" fill="#e4ecf0" stroke="#9aa4aa" stroke-width="0.800"/>
<path d="M603 125.400l2.200-2.400h7.200v6.200l-2.200 2.600h-7.200z" fill="#a8dcf2" stroke="#2a94cc" stroke-width="1" stroke-linejoin="round"/><path d="M603 125.400h7.200v6.400M610.200 125.400l2.200-2.400" fill="none" stroke="#2a94cc" stroke-width="0.800"/>
<path d="M600.800 132.800h10" stroke="#666" stroke-width="0.900" stroke-dasharray="1 1"/><path d="M600.800 122.400v10.400" stroke="#9aa4aa" stroke-width="0.800" stroke-dasharray="1 1"/>
<!-- pattern big -->
<path d="M674.500 73l4.200-4h24.600v25.400l-4.200 4z" fill="#e2e2e2" stroke="#cfcfcf" stroke-width="0.800" stroke-linejoin="round"/>
<path d="M674.500 73h24.600v25.400h-24.600z" fill="#f2f2f2" stroke="#cbcbcb" stroke-width="0.900"/>
<g fill="#cdcdcd"><rect x="678.600" y="77.400" width="3.400" height="3.400"/><rect x="685.600" y="77.400" width="3.400" height="3.400"/><rect x="692.600" y="77.400" width="3.400" height="3.400"/><rect x="678.600" y="84.400" width="3.400" height="3.400"/><rect x="685.600" y="84.400" width="3.400" height="3.400"/><rect x="692.600" y="84.400" width="3.400" height="3.400"/><rect x="678.600" y="91.600" width="3.400" height="3.400"/><rect x="685.600" y="91.600" width="3.400" height="3.400"/><rect x="692.600" y="91.600" width="3.400" height="3.400"/></g>
<g fill="#b4b4b4"><rect x="678.600" y="77.400" width="3.400" height="1.200"/><rect x="685.600" y="77.400" width="3.400" height="1.200"/><rect x="692.600" y="77.400" width="3.400" height="1.200"/><rect x="678.600" y="84.400" width="3.400" height="1.200"/><rect x="685.600" y="84.400" width="3.400" height="1.200"/><rect x="692.600" y="84.400" width="3.400" height="1.200"/><rect x="678.600" y="91.600" width="3.400" height="1.200"/><rect x="685.600" y="91.600" width="3.400" height="1.200"/><rect x="692.600" y="91.600" width="3.400" height="1.200"/></g>
<!-- mirror disabled -->
<path d="M721.300 68.800v14.400" stroke="#c8c8c8" stroke-width="1"/><path d="M714.200 69.600Q719 70.400 719 76v6.400h-4.800z" fill="#f4f4f4" stroke="#c8c8c8" stroke-width="1"/><path d="M728.600 69.600Q723.600 70.400 723.600 76v6.400h5" fill="#f4f4f4" stroke="#c8c8c8" stroke-width="1"/>
<!-- trim disabled -->
<rect x="718.600" y="93.400" width="9.800" height="9.800" fill="#ececec" stroke="#c8c8c8" stroke-width="1"/><circle cx="719" cy="103.200" r="5" fill="#f6f6f6" fill-opacity=".6" stroke="#c8c8c8" stroke-width="1.100"/>
<!-- merge disabled -->
<rect x="718.600" y="117.600" width="9.800" height="9.800" fill="none" stroke="#bdbdbd" stroke-width="1"/><circle cx="719" cy="127.400" r="5" fill="none" stroke="#bdbdbd" stroke-width="1.100"/>
<!-- extend disabled -->
<rect x="765.400" y="69.500" width="15.200" height="13.200" fill="#fafafa" stroke="#c4c4c4" stroke-width="0.900"/><rect x="765.400" y="69.500" width="5.400" height="13.200" fill="#ececec"/><path d="M770.800 69.500v13.200" stroke="#c4c4c4" stroke-width="0.900"/>
<path d="M772.800 76h4" stroke="#a8a8a8" stroke-width="1.400"/><path d="M776 73.200l3.200 2.800l-3.200 2.800z" fill="#a8a8a8"/>
<!-- offset -->
<path d="M765.200 93h13.600q2 0 2 2v13.800h-2.400V97q0-1.600-1.600-1.600h-11.600z" fill="#7a4aa8"/><path d="M765.200 95.400h11.600q1.600 0 1.600 1.600v11.800h-1.600V98.200q0-1.200-1.200-1.200h-10.400z" fill="#c9b4e0" opacity=".8"/>
<path d="M765.400 100.800h7.600v8" fill="none" stroke="#333" stroke-width="1" stroke-dasharray="1.800 1.400"/><path d="M773 100.800l4-4" stroke="#333" stroke-width="1"/><path d="M774 96.400h3.400v3.400" fill="none" stroke="#333" stroke-width="1"/>
<!-- intersect -->
<rect x="770.600" y="117.600" width="9.800" height="9.800" fill="none" stroke="#bdbdbd" stroke-width="1"/><circle cx="771" cy="127.400" r="5" fill="none" stroke="#bdbdbd" stroke-width="1.100"/><path d="M770.800 122.400q5 0 5.200 5" fill="none" stroke="#6a3c9c" stroke-width="1.600"/>
<!-- project -->
<path d="M817.600 74q2.600-.2 4.400-2.400t4.200-.6t4.400 2.800" fill="none" stroke="#a8a8a8" stroke-width="1.200"/>
<path d="M817.200 83.400h11.600l3.400-5" fill="none" stroke="#a8a8a8" stroke-width="1"/>
<path d="M817.800 81q2.600.2 4-2.200t4-1.200t3.800.4" fill="none" stroke="#7a3cb0" stroke-width="1.400"/>
<!-- thicken disabled -->
<path d="M831.600 94.200h-13.600v13.200h13.600M831.600 97h-10.800v7.600h10.800" fill="none" stroke="#c4c4c4" stroke-width="1.100"/>
<!-- solidify disabled -->
<path d="M818.800 131.600v-9.600l-1.600-.4q2.400-3.600 5-1.600t5.600.6l4.600-3.400" fill="none" stroke="#bcbcbc" stroke-width="1.500"/><path d="M818.800 131.600h10.800v-11" fill="none" stroke="#c4c4c4" stroke-width="1.100"/>
<!-- boundary blend big -->
<path d="M888.400 93.600Q890 76 897.400 70.800Q910 67.600 920 75.600Q913.500 84 911.800 98.600Q901 88.500 888.400 93.600z" fill="url(#q-lb2)"/>
<path d="M888.400 93.600Q890 76 897.400 70.800Q910 67.600 920 75.600" fill="none" stroke="#a8a8a8" stroke-width="1.100"/><path d="M888.400 93.600Q901 88.500 911.800 98.600" fill="none" stroke="#a8a8a8" stroke-width="1.100"/>
<path d="M890.600 80.800Q903 76.500 915.200 84.600" fill="none" stroke="#a8a8a8" stroke-width="1"/>
<path d="M920 75.600Q913.500 84 911.800 98.600M909.600 70.200Q901.500 78 899.600 91" fill="none" stroke="#2a8cc0" stroke-width="1.200"/>
<!-- fill -->
<rect x="930.400" y="69.800" width="12.400" height="11.800" fill="url(#q-hatch)" stroke="#2a8cc0" stroke-width="1"/><path d="M930.400 81.800h12.600v-12" fill="none" stroke="#1a78ac" stroke-width="1.400"/>
<!-- style -->
<path d="M928.400 107.400V96.600q7.600-4.400 15.200 0v10.800q-7.600-5-15.200 0z" fill="url(#q-lb2)" stroke="#2a8cc0" stroke-width="1" stroke-linejoin="round"/><path d="M928.400 96.600q7.600-4.400 15.200 0M928.400 107.400q7.600-5 15.200 0" fill="none" stroke="#9a9a9a" stroke-width="1.200"/>
<!-- freestyle -->
<path d="M928.400 121.400l4-4.200h11.400v11.200l-4 4.400h-11.400zM928.400 121.400h11.400v11.400M939.800 121.400l4-4.200M932.400 117.200v11.200l-4 4.400M932.400 128.400h11.400" fill="none" stroke="#555" stroke-width="0.700"/>
<circle cx="935.800" cy="125.400" r="5.200" fill="url(#q-sph)"/>
<!-- component interface big -->
<rect x="1010.500" y="69.800" width="30" height="28.600" fill="#fdecc9" stroke="#d4aa60" stroke-width="1"/>
<path d="M1018.300 69.800h22.200v22h-4.400v-3.200q2.800-1.200 2.800-3.400q0-3-4.600-3t-4.600 3q0 2.200 2.800 3.400v3.200h-14.200v-9.600h2.600q1.400 3 3.600 3q2.600 0 2.600-4.800t-2.600-4.800q-2.200 0-3.600 3h-2.600z" fill="#cfeefb" stroke="#2a9ad6" stroke-width="1" stroke-linejoin="round"/>
</svg>
<!--/RIB2-->
<!--TREE-->
<div id="treetabs"><div style="left:4px;width:30px;background:#fafafa;border-bottom-color:#fafafa;z-index:2"></div><div style="left:33px"></div><div style="left:63px"></div></div>
<div id="tree"></div><div id="treehdr"></div>
<div class="abs" style="left:24px;top:210px;height:18px;line-height:18px;font-family:'Liberation Serif','Noto Serif CJK SC',serif;font-weight:900;font-size:13px;color:#333;white-space:nowrap">模型树</div>
<svg style="left:16px;top:243px" width="18" height="16" viewBox="0 0 18 16"><use href="#i-root"/></svg>
<div class="tr" style="left:33px;top:243px">YZF-9-21.PRT</div>
<svg style="left:34px;top:267px" width="18" height="16" viewBox="0 0 18 16"><use href="#i-plane"/></svg>
<div class="tr" style="left:54px;top:267px">RIGHT</div>
<svg style="left:34px;top:291px" width="18" height="16" viewBox="0 0 18 16"><use href="#i-plane"/></svg>
<div class="tr" style="left:54px;top:291px">TOP</div>
<svg style="left:34px;top:315px" width="18" height="16" viewBox="0 0 18 16"><use href="#i-plane"/></svg>
<div class="tr" style="left:54px;top:315px">FRONT</div>
<svg style="left:34px;top:339px" width="18" height="16" viewBox="0 0 18 16"><use href="#i-csys"/></svg>
<div class="tr" style="left:54px;top:339px;letter-spacing:-0.85px">PRT_CSYS_DEF</div>
<svg style="left:34px;top:363px" width="18" height="16" viewBox="0 0 18 16"><use href="#i-axis"/></svg>
<div class="tr" style="left:54px;top:363px">A_1</div>
<svg style="left:34px;top:387px" width="18" height="16" viewBox="0 0 18 16"><use href="#i-plane"/></svg>
<div class="tr" style="left:54px;top:387px">DTM1</div>
<div class="exp" style="top:415px"></div>
<svg style="left:34px;top:411px" width="18" height="16" viewBox="0 0 18 16"><use href="#i-extrude"/></svg>
<div class="tr" style="left:54px;top:411px">拉伸 1</div>
<svg style="left:34px;top:435px" width="18" height="16" viewBox="0 0 18 16"><use href="#i-sketch"/></svg>
<div class="tr g" style="left:54px;top:435px">草绘 1</div>
<div class="exp" style="top:463px"></div>
<svg style="left:34px;top:459px" width="18" height="16" viewBox="0 0 18 16"><use href="#i-offset"/></svg>
<div class="tr" style="left:54px;top:459px">偏移 1</div>
<div class="exp" style="top:487px"></div>
<svg style="left:34px;top:483px" width="18" height="16" viewBox="0 0 18 16"><use href="#i-extrude"/></svg>
<div class="tr" style="left:54px;top:483px">拉伸 2</div>
<div class="exp" style="top:511px"></div>
<svg style="left:34px;top:507px" width="18" height="16" viewBox="0 0 18 16"><use href="#i-extrude"/></svg>
<div class="tr" style="left:54px;top:507px">拉伸 3</div>
<svg style="left:34px;top:531px" width="18" height="16" viewBox="0 0 18 16"><use href="#i-insert"/></svg>
<div class="tr" style="left:54px;top:531px">在此插入</div>
<div class="abs" style="left:54px;top:557px;width:4px;height:5px;background:#3a3a3a"></div>
<svg style="left:34px;top:555px" width="18" height="16" viewBox="0 0 18 16"><use href="#i-mirror"/></svg>
<div class="tr" style="left:60px;top:555px">镜像 1</div>
<div class="abs" style="left:54px;top:581px;width:4px;height:5px;background:#3a3a3a"></div>
<svg style="left:34px;top:579px" width="18" height="16" viewBox="0 0 18 16"><use href="#i-draft"/></svg>
<div class="tr" style="left:60px;top:579px">拔模斜度 1</div>
<div class="abs" style="left:54px;top:605px;width:4px;height:5px;background:#3a3a3a"></div>
<svg style="left:34px;top:603px" width="18" height="16" viewBox="0 0 18 16"><use href="#i-round"/></svg>
<div class="tr" style="left:60px;top:603px">倒圆角 1</div>
<div class="abs" style="left:54px;top:629px;width:4px;height:5px;background:#3a3a3a"></div>
<svg style="left:34px;top:627px" width="18" height="16" viewBox="0 0 18 16"><use href="#i-round"/></svg>
<div class="tr" style="left:60px;top:627px">倒圆角 2</div>
<div class="abs" style="left:54px;top:653px;width:4px;height:5px;background:#3a3a3a"></div>
<svg style="left:34px;top:651px" width="18" height="16" viewBox="0 0 18 16"><use href="#i-round"/></svg>
<div class="tr" style="left:60px;top:651px">倒圆角 3</div>
<div class="abs" style="left:54px;top:677px;width:4px;height:5px;background:#3a3a3a"></div>
<svg style="left:34px;top:675px" width="18" height="16" viewBox="0 0 18 16"><use href="#i-shell"/></svg>
<div class="tr" style="left:60px;top:675px">壳 1</div>
<div class="abs" style="left:54px;top:701px;width:4px;height:5px;background:#3a3a3a"></div>
<svg style="left:34px;top:699px" width="18" height="16" viewBox="0 0 18 16"><use href="#i-round"/></svg>
<div class="tr" style="left:60px;top:699px">倒圆角 4</div>
<div class="abs" style="left:54px;top:725px;width:4px;height:5px;background:#3a3a3a"></div>
<svg style="left:34px;top:723px" width="18" height="16" viewBox="0 0 18 16"><use href="#i-round"/></svg>
<div class="tr" style="left:60px;top:723px">倒圆角 5</div>
<div class="abs" style="left:54px;top:749px;width:4px;height:5px;background:#3a3a3a"></div>
<svg style="left:34px;top:747px" width="18" height="16" viewBox="0 0 18 16"><use href="#i-mirror"/></svg>
<div class="tr" style="left:60px;top:747px">镜像 2</div>
<div class="exp" style="top:775px"></div>
<div class="abs" style="left:54px;top:773px;width:4px;height:5px;background:#3a3a3a"></div>
<svg style="left:34px;top:771px" width="18" height="16" viewBox="0 0 18 16"><use href="#i-mirror3"/></svg>
<div class="tr" style="left:60px;top:771px">镜像 3</div>
<!--/TREE-->
<!--TREEICO-->
<svg id="treeico" style="left:0;top:170px;z-index:5" width="290" height="70" viewBox="0 170 290 70">
<defs>
<linearGradient id="t-fold" x1="0" y1="0" x2="1" y2="1"><stop offset="0" stop-color="#fffdf6"/><stop offset="1" stop-color="#f6d698"/></linearGradient>
<linearGradient id="t-wood" x1="0" y1="0" x2="1" y2="0"><stop offset="0" stop-color="#c49a48"/><stop offset="0.45" stop-color="#f0dca0"/><stop offset="1" stop-color="#b88a38"/></linearGradient>
<linearGradient id="t-steel" x1="0" y1="0" x2="0" y2="1"><stop offset="0" stop-color="#55555c"/><stop offset="0.5" stop-color="#9a9aa4"/><stop offset="1" stop-color="#5a5a62"/></linearGradient>
<linearGradient id="t-doc" x1="0" y1="0" x2="1" y2="1"><stop offset="0.35" stop-color="#fff"/><stop offset="1" stop-color="#c8dfec"/></linearGradient>
</defs>
<!-- tree tab icon -->
<g fill="#fff" stroke="#333" stroke-width="1.200"><rect x="13.600" y="180.800" width="3.800" height="3.600"/><rect x="13.600" y="187.600" width="3.800" height="3.600"/><rect x="13.600" y="194.500" width="3.800" height="3.600"/><rect x="21.800" y="187.600" width="3.800" height="3.600"/></g>
<path d="M15.500 184.400v3.200M15.500 191.200v3.300M17.400 189.400h4.400" stroke="#333" stroke-width="0.900"/>
<!-- folders -->
<g id="tf"><path d="M40.400 192V183.200q0-1.200 1.200-1.800q3-.8 4.400 0l1.200 1.800h5.200q.8 0 .8.800v8q0 .8-.8.800h-11.200q-.8 0-.8-.8z" fill="url(#t-fold)" stroke="#d0a454" stroke-width="0.900"/><path d="M41.200 181.600q3-1 5.200 0l.8 1.600h-6.400z" fill="#e4b868"/></g>
<use href="#tf" x="3.200" y="4"/><use href="#tf" x="6.400" y="8"/>
<!-- folder star -->
<path d="M70.400 196.400V185q0-1.200 1.200-1.800q3.400-.8 5.400 0l1.200 1.800h7.800q.8 0 .8.800v10.600q0 .8-.8.800h-14.800q-.8 0-.8-.8z" fill="url(#t-fold)" stroke="#d0a454" stroke-width="0.900"/><path d="M71.200 183.400q3.400-1 6.200 0l.8 1.600h-7.800z" fill="#e4b868"/>
<g stroke="#0f5f90" stroke-width="1"><path d="M78.400 188.400v6.600M75.100 191.700h6.600M76.100 189.400l4.600 4.600M80.700 189.400l-4.600 4.600"/></g><circle cx="78.400" cy="191.700" r="1" fill="#fff" stroke="#0f5f90" stroke-width="0.800"/>
<!-- hammer -->
<path d="M198 212.600q0-3.400 3-3.600h4.600q3 .4 3.400 4.400l-.8.400q-1-2-2.600-2.200v3h-5v-2.800h-1.600v1.600h-1z" fill="url(#t-steel)"/>
<rect x="201.200" y="214" width="4.800" height="14.800" rx="1" fill="url(#t-wood)"/>
<rect x="211.400" y="209" width="1.500" height="11.400" fill="#70707a"/><rect x="210" y="220" width="4.200" height="8.800" rx="0.800" fill="url(#t-wood)"/><path d="M210 222.200h4.200" stroke="#a87c30" stroke-width="0.600"/>
<path d="M223.800 217h7.400l-3.700 4.200z" fill="#8a8a8a"/>
<!-- doc -->
<path d="M241.600 209.400h10.600l4.400 4.400v14.800h-15z" fill="url(#t-doc)" stroke="#9a9a9a" stroke-width="1"/><path d="M252.200 209.400v4.400h4.400z" fill="#d4e8f2" stroke="#9a9a9a" stroke-width="0.700"/>
<g fill="#fff" stroke="#555" stroke-width="0.800"><circle cx="245.400" cy="216.400" r="1.100"/><circle cx="245.400" cy="220.500" r="1.100"/><circle cx="245.400" cy="224.500" r="1.100"/></g><path d="M248 216.400h5.800M248 220.500h5.800M248 224.500h5.800" stroke="#777" stroke-width="1"/>
<path d="M265.800 217h7.400l-3.700 4.200z" fill="#8a8a8a"/>
</svg>
<!--/TREEICO-->
<!--GTB-->
<div id="gtb"></div>
<div class="abs" style="left:837px;top:170px;width:5px;height:26px;background:#e8eaec;border-right:1px solid #d0d3d7"></div>
<div class="abs" style="left:1114px;top:170px;width:5px;height:26px;background:#e8eaec"></div>
<div class="abs" style="left:868px;top:170px;width:1px;height:26px;background:#d9dce0"></div>
<div class="abs" style="left:895px;top:170px;width:1px;height:26px;background:#d9dce0"></div>
<div class="abs" style="left:922px;top:170px;width:1px;height:26px;background:#d9dce0"></div>
<div class="abs" style="left:949px;top:170px;width:1px;height:26px;background:#d9dce0"></div>
<div class="abs" style="left:977px;top:170px;width:1px;height:26px;background:#d9dce0"></div>
<div class="abs" style="left:1005px;top:170px;width:1px;height:26px;background:#d9dce0"></div>
<div class="abs" style="left:1032px;top:170px;width:1px;height:26px;background:#d9dce0"></div>
<div class="abs" style="left:1060px;top:170px;width:1px;height:26px;background:#d9dce0"></div>
<div class="abs" style="left:1062px;top:171px;width:24px;height:24px;background:linear-gradient(#b4b4b6 0,#b4b4b6 1px,#d8d9db 2px,#e2e3e5 40%,#f2f2f3 100%);border:1px solid #c9cbce;border-top:none"></div>
<div class="abs" style="left:1089px;top:171px;width:24px;height:24px;background:linear-gradient(#b4b4b6 0,#b4b4b6 1px,#d8d9db 2px,#e2e3e5 40%,#f2f2f3 100%);border:1px solid #c9cbce;border-top:none"></div>
<svg id="gtbico" style="left:834px;top:166px" width="290" height="34" viewBox="834 166 290 34">
<defs>
<linearGradient id="g-lens" x1="0" y1="0" x2="1" y2="1"><stop offset="0" stop-color="#fff"/><stop offset="1" stop-color="#cfeaf6"/></linearGradient>
<linearGradient id="g-rep" x1="0" y1="0" x2="1" y2="1"><stop offset="0" stop-color="#e8f6fb"/><stop offset="0.5" stop-color="#a9d4e4"/><stop offset="1" stop-color="#4a9cba"/></linearGradient>
<linearGradient id="g-top" x1="0" y1="0" x2="1" y2="0"><stop offset="0" stop-color="#d8eefa"/><stop offset="1" stop-color="#9accea"/></linearGradient>
<linearGradient id="g-side" x1="0" y1="0" x2="0" y2="1"><stop offset="0" stop-color="#4a98c6"/><stop offset="1" stop-color="#8cc4e2"/></linearGradient>
</defs>
<!-- refit -->
<rect x="847.500" y="176.200" width="14" height="13.300" fill="#f6f6f6" stroke="#a8a8a8" stroke-width="0.900"/><path d="M847.500 176h14" stroke="#8a8a8a" stroke-width="1.300"/>
<path d="M857.600 185.600l4.600 4.600" stroke="#b8b8b8" stroke-width="2.600" stroke-linecap="round"/><path d="M857.600 185.600l4.600 4.600" stroke="#f4f4f4" stroke-width="1" stroke-linecap="round"/>
<circle cx="854.500" cy="182.400" r="4.100" fill="url(#g-lens)" stroke="#1a78a8" stroke-width="1.100"/>
<!-- zoom in -->
<path d="M884 184.800l5 5.400" stroke="#b0b0b0" stroke-width="2.800" stroke-linecap="round"/><path d="M884 184.800l5 5.400" stroke="#f6f6f6" stroke-width="1.100" stroke-linecap="round"/>
<circle cx="880" cy="180.700" r="5.300" fill="url(#g-lens)" stroke="#1a78a8" stroke-width="1.100"/><path d="M880 177.600v6.200M876.900 180.700h6.200" stroke="#0f5f90" stroke-width="1.700"/>
<!-- zoom out -->
<path d="M911 184.800l5 5.400" stroke="#b0b0b0" stroke-width="2.800" stroke-linecap="round"/><path d="M911 184.800l5 5.400" stroke="#f6f6f6" stroke-width="1.100" stroke-linecap="round"/>
<circle cx="907" cy="180.700" r="5.300" fill="url(#g-lens)" stroke="#1a78a8" stroke-width="1.100"/><path d="M903.900 180.700h6.200" stroke="#0f5f90" stroke-width="1.700"/>
<!-- repaint -->
<rect x="929" y="176.200" width="14.400" height="13.800" fill="url(#g-rep)" stroke="#a0a0a0" stroke-width="0.900"/><path d="M929 176h14.400" stroke="#8a8a8a" stroke-width="1.400"/>
<path d="M929.400 181.600q6-4.600 12-1.200l-.4-3.400h-11.600z" fill="#e4f4fb" opacity=".9"/>
<path d="M940.800 182l-7.200 6.800" stroke="#0f4f7a" stroke-width="1.400"/><path d="M931.600 190l1.200-2.400l2.600 1.200l-1.400 1.200z" fill="#0f4f7a"/>
<!-- display style cube -->
<path d="M955.500 179.400l4-4.200h11.400v11.400l-3.600 4z" fill="url(#g-top)"/><path d="M967.300 179.400l3.600-4.200v11.400l-3.600 4z" fill="url(#g-side)"/>
<rect x="955.500" y="179.400" width="11.800" height="11" fill="#fff" stroke="#5ab4e0" stroke-width="1"/><path d="M955.500 179.400l4-4.200h11.400" fill="none" stroke="#8ccaea" stroke-width="0.800"/>
<path d="M974.400 190.400v3h-3z" fill="#333"/>
<!-- saved orientations -->
<path d="M983.500 179.400l4-4.200h10.400v11.400l-3.600 4z" fill="url(#g-top)"/><path d="M994.300 179.400l3.600-4.200v11.400l-3.600 4z" fill="url(#g-side)"/>
<rect x="983.500" y="179.400" width="10.800" height="10.600" fill="#fff" stroke="#5ab4e0" stroke-width="1"/>
<rect x="991.200" y="182.600" width="7.200" height="7.600" fill="#fafafa" stroke="#8a8a8a" stroke-width="0.800"/><path d="M992.600 184.600h1M994.400 184.600h2.800M992.600 186.500h1M994.400 186.500h2.800M992.600 188.400h1M994.400 188.400h2.800" stroke="#666" stroke-width="0.800"/>
<path d="M1002.400 190.400v3h-3z" fill="#333"/>
<!-- view manager -->
<rect x="1011.600" y="175.600" width="13.200" height="14" fill="#fff" stroke="#a8a8a8" stroke-width="0.900"/><path d="M1011.600 175.600h13.200" stroke="#8a8a8a" stroke-width="1.200"/><path d="M1011.600 179h13.200M1011.600 182.400h13.200M1011.600 185.800h6M1015.600 176v13.600" stroke="#b4b4b4" stroke-width="0.800"/><path d="M1011.800 189.200h5" stroke="#7ab8dc" stroke-width="1"/>
<path d="M1016.600 185q0-1 1-1h1.800l.8-1.200h3.200l.8 1.200h1.800q1 0 1 1v4.600q0 1-1 1h-8.400q-1 0-1-1z" fill="#444"/><circle cx="1021.800" cy="187.300" r="2.300" fill="#9a9a9a" stroke="#222" stroke-width="0.800"/><circle cx="1021.800" cy="187.300" r="1" fill="#555"/>
<!-- datum display -->
<g stroke="#8a6d2f" stroke-width="1.300" fill="none"><path d="M1038.200 175.800l4.600 4.400M1042.800 175.800l-4.600 4.400"/><path d="M1048.200 175L1041 190.600" stroke-dasharray="3.200 2.400" stroke-width="1.500"/><path d="M1045.600 186.200h8.400M1052.400 180.600l-4.400 10.200M1047.400 181.600l5.600 9"/></g>
<path d="M1057.400 190.400v3h-3z" fill="#333"/>
<!-- annotation display -->
<rect x="1066.600" y="175.800" width="9" height="5.600" fill="#fdf8e2" stroke="#9a9a9a" stroke-width="0.900"/>
<path d="M1075.600 178h6.200v4.600" fill="none" stroke="#333" stroke-width="1.200"/><path d="M1077.200 183.800l4.800-3.400l.6 3.600z" fill="#333"/><path d="M1081.800 181.600l-3.400 2.400" stroke="#333" stroke-width="1.300"/>
<path d="M1073 188.500q4.600-4.400 9.200 0q-4.600 4.400-9.200 0z" fill="#333"/><circle cx="1077.600" cy="188.500" r="1.700" fill="#fff"/><circle cx="1077.600" cy="188.500" r="0.800" fill="#333"/>
<!-- spin center -->
<path d="M1096.500 178.300l5 5.100l-5 4.900M1101.500 183.400h5" fill="none" stroke="#333" stroke-width="1.100"/>
<circle cx="1096.500" cy="178.300" r="2.500" fill="#6cae6c" stroke="#4a8c4a" stroke-width="0.500"/><circle cx="1106.600" cy="183.400" r="2.500" fill="#e27272" stroke="#c05050" stroke-width="0.500"/><circle cx="1096.500" cy="188.400" r="2.500" fill="#3c8cbc" stroke="#2a6a98" stroke-width="0.500"/>
</svg>
<!--/GTB-->
<!--MODEL-->
<svg id="model" style="left:0;top:0" width="1680" height="1018" viewBox="0 0 1680 1018">
<defs>
<linearGradient id="gstrip" gradientUnits="userSpaceOnUse" x1="1000" y1="418" x2="1000" y2="640"><stop offset="0" stop-color="#7f8690"/><stop offset="0.1" stop-color="#9299a3"/><stop offset="0.24" stop-color="#f0f4f8"/><stop offset="0.34" stop-color="#c3c9d1"/><stop offset="0.5" stop-color="#868c96"/><stop offset="0.75" stop-color="#70767f"/><stop offset="1" stop-color="#6a707a"/></linearGradient>
</defs>
<path d="M775.3 287.2L995.7 317.3L943.5 442.2L912.3 437.8Z" fill="#8b929c"/>
<path d="M912.3 437.8L943.5 442.2L976.9 873.2L945.4 870.8Z" fill="#686d76"/>
<path d="M945.4 870.8L976.9 873.2L999.5 822.5L1006 825.2L972.5 904.3Z" fill="#8b929c"/>
<path d="M1004 417.5L1009 418.4L1009.3 422.6C1008.6 424.1 1006.7 427.4 1005.3 431.5C1003.9 435.6 1002.3 441.8 1001.0 447.0C999.7 452.2 998.4 457.7 997.3 463.0C996.2 468.3 995.4 473.5 994.6 478.7C993.8 483.9 993.1 489.2 992.5 494.4C991.9 499.6 991.3 504.8 990.9 510.0C990.5 515.2 990.1 520.5 989.9 525.8C989.7 531.1 989.8 535.9 989.9 541.6C990.0 547.3 990.4 553.5 990.7 560.0C991.0 566.5 991.3 570.3 991.9 580.3C992.5 590.3 993.2 605.0 994.0 620.0C994.8 635.0 995.8 653.3 996.7 670.0C997.6 686.7 998.6 705.0 999.4 720.0C1000.2 735.0 1000.6 742.5 1001.6 760.0C1002.6 777.5 1004.6 814.3 1005.2 825.2L998.9 822C998.3 811.7 996.3 777.0 995.3 760.0C994.3 743.0 993.9 735.0 993.0 720.0C992.1 705.0 991.2 686.7 990.2 670.0C989.2 653.3 988.2 635.0 987.3 620.0C986.4 605.0 985.6 590.0 985.0 580.0C984.4 570.0 984.2 566.4 983.9 560.0C983.6 553.6 983.2 547.3 983.1 541.6C983.0 535.9 983.0 531.1 983.1 525.8C983.2 520.5 983.5 515.2 983.9 510.0C984.3 504.8 984.9 499.6 985.5 494.4C986.1 489.2 986.7 483.9 987.5 478.7C988.3 473.5 989.2 468.3 990.2 463.0C991.2 457.7 992.4 452.2 993.8 447.0C995.2 441.8 996.8 436.4 998.5 431.5C1000.2 426.6 1003.1 419.8 1004.0 417.5Z" fill="url(#gstrip)"/>
<path d="M1008.8 420.6L1009.3 422.6C1008.6 424.1 1006.7 427.4 1005.3 431.5C1003.9 435.6 1002.3 441.8 1001.0 447.0C999.7 452.2 998.4 457.7 997.3 463.0C996.2 468.3 995.4 473.5 994.6 478.7C993.8 483.9 993.1 489.2 992.5 494.4C991.9 499.6 991.3 504.8 990.9 510.0C990.5 515.2 990.1 520.5 989.9 525.8C989.7 531.1 989.8 535.9 989.9 541.6C990.0 547.3 990.4 553.5 990.7 560.0C991.0 566.5 991.3 570.3 991.9 580.3C992.5 590.3 993.2 605.0 994.0 620.0C994.8 635.0 995.8 653.3 996.7 670.0C997.6 686.7 998.6 705.0 999.4 720.0C1000.2 735.0 1000.6 742.5 1001.6 760.0C1002.6 777.5 1004.6 814.3 1005.2 825.2L972.7 904" fill="none" stroke="#3e4147" stroke-width="1.5" stroke-linejoin="round"/>
<path d="M995.7 317.3L1004 417.5C1003.1 419.8 1000.2 426.6 998.5 431.5C996.8 436.4 995.2 441.8 993.8 447.0C992.4 452.2 991.2 457.7 990.2 463.0C989.2 468.3 988.3 473.5 987.5 478.7C986.7 483.9 986.1 489.2 985.5 494.4C984.9 499.6 984.3 504.8 983.9 510.0C983.5 515.2 983.2 520.5 983.1 525.8C983.0 531.1 983.0 535.9 983.1 541.6C983.2 547.3 983.6 553.6 983.9 560.0C984.2 566.4 984.4 570.0 985.0 580.0C985.6 590.0 986.4 605.0 987.3 620.0C988.2 635.0 989.2 653.3 990.2 670.0C991.2 686.7 992.1 705.0 993.0 720.0C993.9 735.0 994.3 743.0 995.3 760.0C996.3 777.0 998.3 811.7 998.9 822.0L976.9 873.2L943.5 442.2Z" fill="#3a3d43"/>
<path id="gface" d="M775.3 287.2L912.3 437.8L945.4 870.8L972.5 904.3L884.5 808.7L857.4 580C857.0 575.5 855.9 561.5 855.0 553.0C854.1 544.5 853.2 536.3 852.0 528.8C850.8 521.3 849.8 515.1 848.0 508.0C846.2 500.9 844.5 494.6 841.5 486.3C838.5 478.0 834.1 466.8 830.0 458.0C825.9 449.2 822.0 441.1 816.7 433.3C811.4 425.5 803.6 417.8 798.0 411.0C792.4 404.2 785.6 395.7 783.1 392.6Z" fill="#1b6428" stroke="#22d044" stroke-width="1.1" stroke-linejoin="round"/>
<path d="M874.4 595.4L872.8 578" stroke="#30ee30" stroke-width="1.2"/><circle cx="872.6" cy="577.5" r="2.6" fill="#33f033"/>
<path d="M874.4 595.6L867 594.8L866.6 593.6L851 592.9" stroke="#30f0f0" stroke-width="1.2" fill="none"/><circle cx="851" cy="592.9" r="2.1" fill="#3cf4f4"/>
<path d="M874.4 596L867.9 610.8" stroke="#f03030" stroke-width="1.2" stroke-dasharray="1.6 0.8"/><circle cx="867.7" cy="611.2" r="2.9" fill="#f23434"/>
<text x="291" y="898" font-family="Liberation Sans,Noto Sans CJK SC,sans-serif" font-size="12" font-weight="350" fill="#5e5e5e">插入模式</text>
</svg>
<!--/MODEL-->
<!--STATUS-->
<div id="stline"></div><div id="status"></div><div id="taskbar"></div>
<div class="abs" style="left:0;top:1008px;width:1680px;height:2px;background:linear-gradient(90deg,#2a86dc,#3a9cf0 20%,#4aa4f0 38%,#5a9ce0 55%,#2a6cc0 65%,#1558ac 80%,#0f4f9e)"></div>
<div class="abs" style="left:0;top:1010px;width:59px;height:8px;background:#6f8aac"></div>
<div class="abs" style="left:8px;top:1012px;width:34px;height:20px;border-radius:17px;border:1.5px solid #2a5a8c;background:#9ab4d2"></div>
<div class="abs" style="left:60px;top:1010px;width:57px;height:10px;background:linear-gradient(#eef3fa,#d4e0f0);border:1px solid #7a94b4;border-radius:2px 2px 0 0"></div>
<div class="abs" style="left:118px;top:1010px;width:65px;height:10px;background:#a2c0e2;border:1px solid #7a94b4;border-radius:2px 2px 0 0"></div>
<div class="abs" style="left:135px;top:1014px;width:32px;height:8px;background:#4ab4f8;border-radius:2px 2px 0 0;"></div>
<div class="abs" style="left:184px;top:1010px;width:50px;height:10px;background:linear-gradient(#eef3fa,#d4e0f0);border:1px solid #7a94b4;border-radius:2px 2px 0 0"></div>
<div class="abs" style="left:196px;top:1014px;width:26px;height:8px;background:#f2dea0;border-radius:2px 2px 0 0;"></div>
<div class="abs" style="left:246px;top:1010px;width:50px;height:10px;background:linear-gradient(#eef3fa,#d4e0f0);border:1px solid #7a94b4;border-radius:2px 2px 0 0"></div>
<div class="abs" style="left:256px;top:1014px;width:30px;height:8px;background:#3a88d8;border-radius:2px 2px 0 0;"></div>
<div class="abs" style="left:308px;top:1010px;width:57px;height:10px;background:linear-gradient(#eef3fa,#d4e0f0);border:1px solid #7a94b4;border-radius:2px 2px 0 0"></div>
<div class="abs" style="left:370px;top:1010px;width:57px;height:10px;background:linear-gradient(#eef3fa,#d4e0f0);border:1px solid #7a94b4;border-radius:2px 2px 0 0"></div>
<div class="abs" style="left:384px;top:1014px;width:29px;height:8px;background:#3048c8;border-radius:2px 2px 0 0;"></div>
<div class="abs" style="left:431px;top:1010px;width:53px;height:10px;background:linear-gradient(#eef3fa,#d4e0f0);border:1px solid #7a94b4;border-radius:2px 2px 0 0"></div>
<div class="abs" style="left:448px;top:1014px;width:20px;height:8px;background:#b0b4b0;border-radius:2px 2px 0 0;"></div>
<div class="abs" style="left:493px;top:1010px;width:60px;height:10px;background:linear-gradient(#eef3fa,#d4e0f0);border:1px solid #7a94b4;border-radius:2px 2px 0 0"></div>
<div class="abs" style="left:512px;top:1014px;width:22px;height:8px;background:#fff;border-radius:6px 6px 0 0;"></div>
<div class="abs" style="left:557px;top:1010px;width:57px;height:10px;background:linear-gradient(#eef3fa,#d4e0f0);border:1px solid #7a94b4;border-radius:2px 2px 0 0"></div>
<div class="abs" style="left:568px;top:1014px;width:33px;height:8px;background:#fff;border-radius:2px 2px 0 0;border:1px solid #555;"></div>
<div class="abs" style="left:78px;top:1015px;width:20px;height:12px;border-radius:10px;background:#fff"></div>

<div class="abs" style="left:6px;top:984px;width:22px;height:22px;border:1px solid #c8c8c8;border-top-color:#a8a8a8;border-left-color:#b4b4b4;background:#f5f5f5;box-shadow:inset 0 1px 1px #d4d4d4"></div>
<div class="abs" style="left:32px;top:984px;width:22px;height:22px;border:1px solid #c6c6c6;background:#e9e9ea"></div>
<div class="abs" style="left:63px;top:982px;width:1px;height:25px;background:#d8d8d8"></div>
<div class="abs" style="left:71px;top:990px;width:5px;height:5px;border-radius:3px;background:#1a5a84"></div>
<div class="abs" style="left:81px;top:984px;height:16px;line-height:16px;font-size:12px;font-weight:350;color:#444;white-space:nowrap">插入模式已经激活。</div>
<div class="abs" style="left:1233px;top:980px;width:1px;height:27px;background:#dadada"></div>
<div class="abs" style="left:1263px;top:980px;width:1px;height:27px;background:#dadada"></div>
<div class="abs" style="left:1299px;top:980px;width:1px;height:27px;background:#dadada"></div>
<div class="abs" style="left:1340px;top:980px;width:1px;height:27px;background:#dadada"></div>
<div class="abs" style="left:1270px;top:988px;width:10px;height:10px;border-radius:5px;background:#3fcf3f"></div>
<div class="abs" style="left:1283px;top:991px;width:5px;height:5px;border-radius:3px;background:#c4c4c4"></div>
<div class="abs" style="left:1289px;top:991px;width:5px;height:5px;border-radius:3px;background:#c4c4c4"></div>
<svg style="left:1304px;top:985px" width="16" height="16" viewBox="0 0 16 16"><path d="M2.2 1v14" stroke="#a8a8a8" stroke-width="1.4"/><path d="M3 1.6l9.4 3.4L3 9z" fill="#b4b4b4"/></svg>
<div class="abs" style="left:1344px;top:981px;width:40px;height:24px;border:1px solid #b4b4b4;border-radius:3px;background:linear-gradient(#f8f8f8,#e4e4e4)"></div>
<svg style="left:1355px;top:985px" width="18" height="16" viewBox="0 0 18 16"><path d="M2.6 3.2h4.2v2h4.4v-2h4.2l1.6 10.600h-5.400l-.8-4h-3.600l-.8 4H1z" fill="#2c2c2c"/><rect x="3.4" y="1.400" width="2.800" height="2.200" fill="#2c2c2c"/><rect x="11.800" y="1.400" width="2.800" height="2.200" fill="#2c2c2c"/><path d="M3.4 6.500v4M14.600 6.500v4" stroke="#8a8a8a" stroke-width="0.8"/></svg>
<div class="abs" style="left:1389px;top:985px;height:16px;line-height:16px;font-size:13px;font-weight:350;color:#333;white-space:nowrap;letter-spacing:0.2px">选择了 <span style="font-family:'Liberation Serif',serif;font-size:12px;color:#667">1</span> 项</div>
<div class="abs" style="left:1484px;top:984px;width:178px;height:19px;border:1px solid #c6c6c6;background:linear-gradient(#fff,#f4f4f4)"></div>
<div class="abs" style="left:1647px;top:985px;width:1px;height:17px;background:#d0d0d0"></div>
<div class="abs" style="left:1492px;top:985px;height:17px;line-height:17px;font-size:13px;font-weight:350;color:#333">智能</div>
<div class="arr" style="left:1651px;top:992px;border-top-color:#909090"></div>
<!-- watermark fragment -->
<div class="abs" style="left:1666px;top:1011px;width:14px;height:8px;background:#6a829e;border-left:1px solid #a8b8cc;border-top:1px solid #94a6bc"></div>
<svg style="left:1598px;top:982px" width="40" height="34" viewBox="0 0 40 34"><path d="M21 2Q9 12 7 24l14-2zM22 6q6 8 6 15l-5 .6z" fill="#fff" opacity=".85"/><path d="M2 27q8-4 16 0t18-2q-8 6-17 3t-17 2z" fill="#fff" opacity=".85"/><path d="M6 30q8-1 12 1t10-1q-6 4-11 3t-11-3z" fill="#fff" opacity=".8"/></svg>
<div class="abs" style="left:1636px;top:991px;height:11px;line-height:11px;font-size:9.500px;font-weight:bold;color:#fff;white-space:nowrap;opacity:.75">云中帆教育</div>
<div class="abs" style="left:1636px;top:1001px;height:8px;line-height:8px;font-size:7px;color:#fff;white-space:nowrap;opacity:.7">www.yzfjy.com</div>
<svg id="stico" style="left:0;top:980px" width="60" height="28" viewBox="0 980 60 28">
<g fill="#fff" stroke="#333" stroke-width="1.100"><rect x="14.500" y="988" width="3.200" height="3.200"/><rect x="14.500" y="993.800" width="3.200" height="3.200"/><rect x="14.500" y="999.500" width="3.200" height="3.200"/><rect x="21.600" y="993.800" width="3.200" height="3.200"/></g><path d="M16.100 991.200v2.600M16.100 997v2.500M17.700 995.400h3.900" stroke="#333" stroke-width="0.900"/>
<defs><radialGradient id="s-gl" cx="0.4" cy="0.35" r="0.7"><stop offset="0" stop-color="#9fdcfa"/><stop offset="1" stop-color="#1a7cc8"/></radialGradient></defs>
<circle cx="43" cy="995" r="6" fill="url(#s-gl)"/><path d="M39.500 992.500q2-1 3 .5t2.500 0M40 997q2 .5 2.500 2M45.500 996q1 1.500 0 3" fill="none" stroke="#d8f0fc" stroke-width="1.100"/>
<ellipse cx="43" cy="994.800" rx="8.600" ry="3.600" transform="rotate(-38 43 994.800)" fill="none" stroke="#444" stroke-width="1"/>
</svg>
<!--/STATUS-->
</body>
</html>
